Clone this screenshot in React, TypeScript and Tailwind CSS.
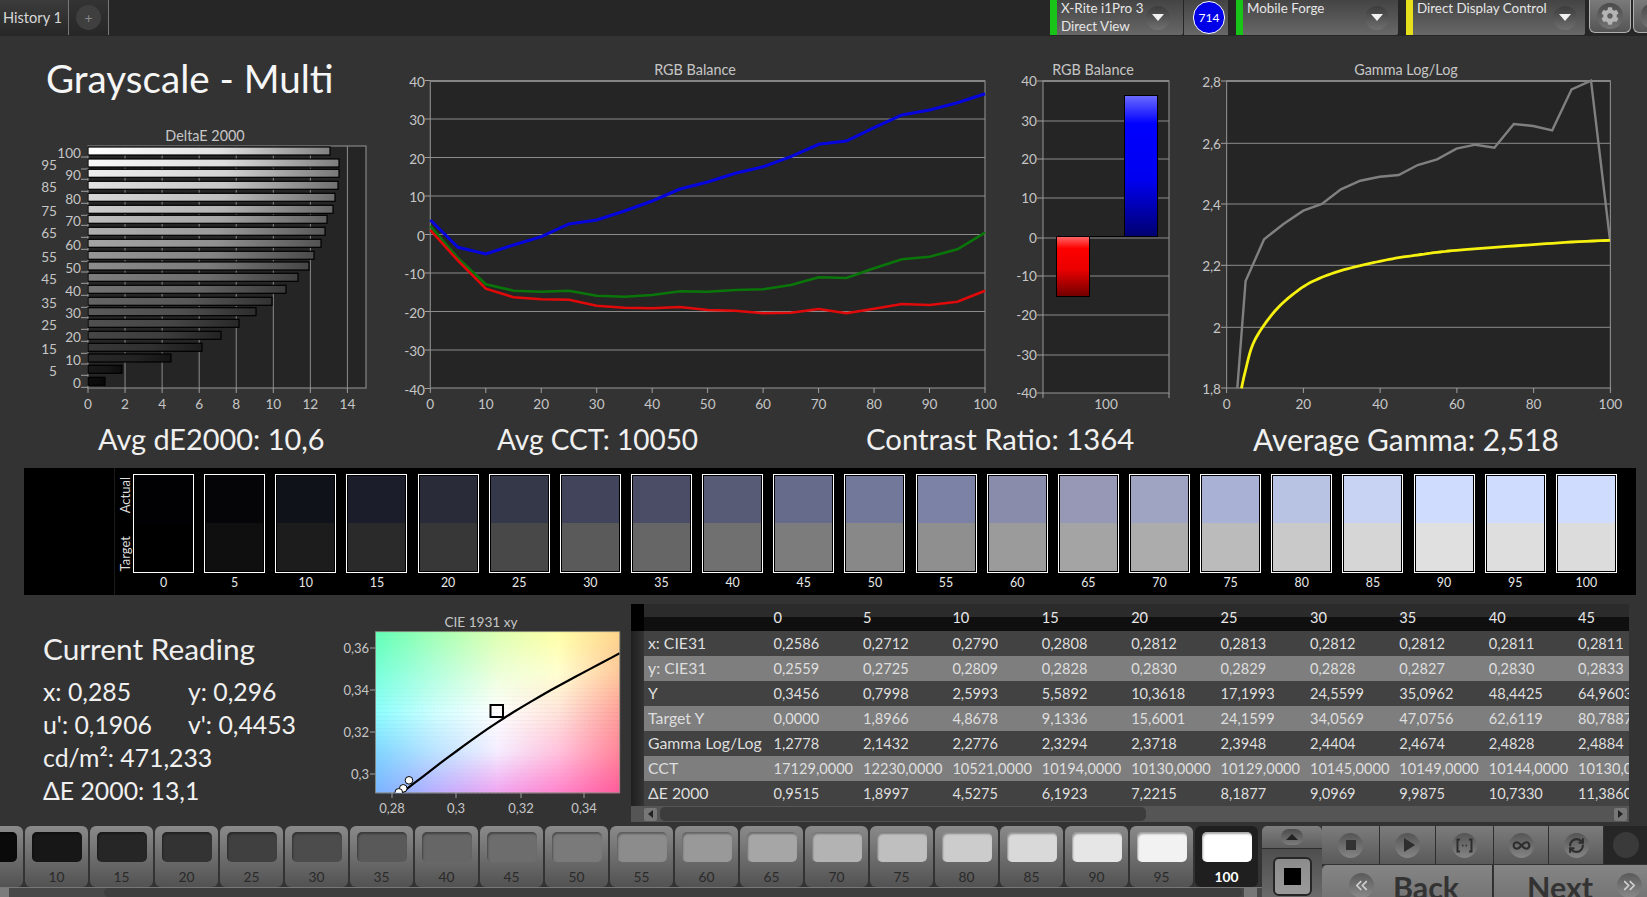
import React from "react";
import { FaCog } from "react-icons/fa";
import { Infinity as InfinityIcon, RefreshCw, ChevronsLeft, ChevronsRight } from "lucide-react";

const AX = "#c6c6c6";
const GRID = "#8c8c8c";
const FS = 13.6;
const TS = 14.4;

function pts(list: number[][]) {
  return list.map((p) => `${p[0].toFixed(1)},${p[1].toFixed(1)}`).join(" ");
}

function smooth(p: number[][]) {
  const out: number[][] = [];
  for (let i = 0; i < p.length - 1; i++) {
    const a = p[Math.max(0, i - 1)], b = p[i], c = p[i + 1], d = p[Math.min(p.length - 1, i + 2)];
    for (let k = 0; k < 6; k++) {
      const t = k / 6, t2 = t * t, t3 = t2 * t;
      out.push([0, 1].map((q) => 0.5 * (2 * b[q] + (c[q] - a[q]) * t + (2 * a[q] - 5 * b[q] + 4 * c[q] - d[q]) * t2 + (3 * b[q] - a[q] - 3 * c[q] + d[q]) * t3)));
    }
  }
  out.push(p[p.length - 1]);
  return out;
}

/* ---------- DeltaE bars ---------- */
const dEBars = [
  [100, 151, 330, 255], [95, 163, 339, 250], [90, 173.3, 339, 240], [85, 185.3, 338, 225], [80, 197.3, 335, 215],
  [75, 209.3, 333, 205], [70, 219.3, 327, 190], [65, 231.3, 325, 175], [60, 243.3, 321, 165], [55, 255.3, 314, 150],
  [50, 266, 309, 140], [45, 277.3, 298, 125], [40, 289.3, 286, 115], [35, 301.3, 272, 100], [30, 311.7, 256, 90],
  [25, 323.3, 239, 80], [20, 335.3, 221, 70], [15, 347.3, 202, 55], [10, 358, 171, 40], [5, 369.3, 122, 25], [0, 381.3, 105, 12],
];

function DeltaChart() {
  const xs = [0, 2, 4, 6, 8, 10, 12, 14];
  return (
    <svg width={400} height={300} viewBox="0 120 400 300" className="block">
      <defs>
        {dEBars.map(([n, , , l]) => (
          <linearGradient key={n} id={`de${n}`} x1="0" x2="1" y1="0" y2="0">
            <stop offset="0" stopColor={`rgb(${l},${l},${l})`} />
            <stop offset="0.55" stopColor={`rgb(${l * 0.88},${l * 0.88},${l * 0.88})`} />
            <stop offset="1" stopColor={`rgb(${l * 0.5},${l * 0.5},${l * 0.5})`} />
          </linearGradient>
        ))}
      </defs>
      <text x={205} y={141} textAnchor="middle" fontSize={TS} fill={AX}>DeltaE 2000</text>
      <rect x={88} y={146} width={278} height={242} fill="#252525" stroke="#858585" strokeWidth={1.2} />
      {xs.map((v) => {
        const x = 88 + v * 18.53;
        return (
          <g key={v}>
            {v > 0 && <line x1={x} x2={x} y1={146} y2={388} stroke={GRID} strokeWidth={1} />}
            <line x1={x} x2={x} y1={388} y2={393} stroke="#a0a0a0" />
            <text x={x} y={409} textAnchor="middle" fontSize={FS} fill={AX}>{v}</text>
          </g>
        );
      })}
      {dEBars.map(([n, cy, right], i) => (
        <g key={n}>
          <line x1={81} x2={88} y1={cy + 6} y2={cy + 6} stroke="#a0a0a0" />
          <rect x={88} y={cy - 4} width={right - 88} height={8} fill={`url(#de${n})`} stroke="#000" strokeWidth={1.2} />
          <text x={i % 2 === 0 ? 81 : 57} y={cy + 6.5} textAnchor="end" fontSize={FS} fill={AX}>{n}</text>
        </g>
      ))}
    </svg>
  );
}

/* ---------- RGB line chart ---------- */
const zx2 = (i: number) => 430.3 + i * 27.74;
const zy = (v: number) => 50 + v / 3;
const blue = [510, 592, 612, 585, 560, 522, 510, 483, 453, 417, 396, 370, 350, 320, 283, 273, 233, 195, 180, 158, 131];
const green = [528, 625, 703, 722, 725, 722, 737, 740, 735, 724, 725, 720, 718, 705, 682, 684, 655, 628, 620, 598, 548];
const red = [540, 632, 716, 742, 748, 749, 767, 773, 775, 771, 780, 782, 790, 788, 777, 790, 776, 762, 765, 755, 722];

function RgbChart() {
  const ys = [40, 30, 20, 10, 0, -10, -20, -30, -40];
  const yv = (v: number) => 234.5 - v * 3.85;
  const line = (a: number[]) => pts(a.map((v, i) => [zx2(i), zy(v)]));
  return (
    <svg width={610} height={384} viewBox="400 36 610 384" className="block">
      <text x={695} y={75} textAnchor="middle" fontSize={TS} fill={AX}>RGB Balance</text>
      <rect x={430.3} y={81} width={554.7} height={307} fill="#252525" stroke="#858585" strokeWidth={1.2} />
      <line x1={430} x2={985} y1={81} y2={81} stroke="#858585" strokeWidth={2} />
      {ys.map((v) => (
        <g key={v}>
          {v !== 40 && v !== -40 && <line x1={430} x2={985} y1={yv(v)} y2={yv(v)} stroke={GRID} strokeWidth={1} />}
          <line x1={425} x2={430} y1={yv(v)} y2={yv(v)} stroke="#a0a0a0" />
          <text x={425} y={yv(v) + 6} textAnchor="end" fontSize={FS} fill={AX}>{v}</text>
        </g>
      ))}
      {[0, 10, 20, 30, 40, 50, 60, 70, 80, 90, 100].map((v) => {
        const x = 430.3 + v * 5.547;
        return (
          <g key={v}>
            <line x1={x} x2={x} y1={388} y2={393} stroke="#a0a0a0" />
            <text x={x} y={409} textAnchor="middle" fontSize={FS} fill={AX}>{v}</text>
          </g>
        );
      })}
      <polyline points={line(green)} fill="none" stroke="#0a760a" strokeWidth={2.6} />
      <polyline points={line(red)} fill="none" stroke="#e00a0a" strokeWidth={2.6} />
      <polyline points={line(blue)} fill="none" stroke="#0606dc" strokeWidth={3} />
    </svg>
  );
}

/* ---------- RGB bars ---------- */
function RgbBars() {
  const rows: [number, number][] = [[40, 81], [30, 121], [20, 159], [10, 198], [0, 238], [-10, 276], [-20, 315], [-30, 355], [-40, 393]];
  return (
    <svg width={185} height={384} viewBox="1010 36 185 384" className="block">
      <defs>
        <linearGradient id="rb" x1="0" x2="0" y1="0" y2="1">
          <stop offset="0" stopColor="#ff6868" />
          <stop offset="0.2" stopColor="#ff0000" />
          <stop offset="0.55" stopColor="#ea0000" />
          <stop offset="1" stopColor="#700000" />
        </linearGradient>
        <linearGradient id="bb" x1="0" x2="0" y1="0" y2="1">
          <stop offset="0" stopColor="#6c6cff" />
          <stop offset="0.2" stopColor="#0000ff" />
          <stop offset="0.6" stopColor="#0000f0" />
          <stop offset="1" stopColor="#000070" />
        </linearGradient>
      </defs>
      <text x={1093} y={75} textAnchor="middle" fontSize={TS} fill={AX}>RGB Balance</text>
      <rect x={1043} y={81} width={126} height={312} fill="#252525" stroke="#858585" strokeWidth={1.2} />
      <line x1={1043} x2={1169} y1={81} y2={81} stroke="#858585" strokeWidth={2} />
      {rows.map(([v, y]) => (
        <g key={v}>
          {v !== 40 && v !== -40 && <line x1={1043} x2={1169} y1={y} y2={y} stroke={GRID} />}
          <line x1={1037} x2={1043} y1={y} y2={y} stroke="#a0a0a0" />
          <text x={1037} y={y + 5} textAnchor="end" fontSize={FS} fill={AX}>{v}</text>
        </g>
      ))}
      <line x1={1089} x2={1125} y1={236.5} y2={236.5} stroke="#000" />
      <rect x={1056.5} y={236.5} width={33} height={60} fill="url(#rb)" stroke="#000" />
      <rect x={1124.5} y={95.5} width={33} height={141} fill="url(#bb)" stroke="#000" />
      <line x1={1043} x2={1043} y1={393} y2={398} stroke="#a0a0a0" />
      <line x1={1169} x2={1169} y1={393} y2={398} stroke="#a0a0a0" />
      <text x={1106} y={409} textAnchor="middle" fontSize={FS} fill={AX}>100</text>
    </svg>
  );
}

/* ---------- Gamma ---------- */
const gx = (v: number) => 1000 + v / 2.423;
const grayLine = [[575, 1015], [595, 693], [640, 568], [687, 522], [735, 482], [780, 462], [826, 418], [873, 392], [920, 380], [966, 375], [1012, 345], [1059, 328], [1106, 296], [1152, 284], [1198, 293], [1245, 222], [1292, 228], [1338, 241], [1385, 118], [1432, 92], [1478, 570]];
const yellowLine = [[585, 1015], [595, 960], [612, 885], [640, 825], [680, 765], [735, 710], [780, 682], [826, 662], [873, 647], [920, 634], [966, 623], [1012, 615], [1059, 607], [1106, 601], [1198, 592], [1292, 584], [1385, 576], [1478, 571]];

function GammaChart() {
  const rows: [string, number][] = [["2,8", 81], ["2,6", 143.3], ["2,4", 204], ["2,2", 265.3], ["2", 327.3], ["1,8", 388]];
  return (
    <svg width={452} height={384} viewBox="1195 36 452 384" className="block">
      <text x={1406} y={75} textAnchor="middle" fontSize={TS} fill={AX}>Gamma Log/Log</text>
      <rect x={1226.6} y={81} width={383.8} height={307} fill="#252525" stroke="#858585" strokeWidth={1.2} />
      <line x1={1226.6} x2={1610.4} y1={81} y2={81} stroke="#858585" strokeWidth={2} />
      {rows.map(([l, y], i) => (
        <g key={l}>
          {i > 0 && i < 5 && <line x1={1226.6} x2={1610.4} y1={y} y2={y} stroke={GRID} />}
          <line x1={1221} x2={1226.6} y1={y} y2={y} stroke="#a0a0a0" />
          <text x={1221} y={y + 6} textAnchor="end" fontSize={FS} fill={AX}>{l}</text>
        </g>
      ))}
      {[0, 20, 40, 60, 80, 100].map((v) => {
        const x = 1226.6 + v * 3.838;
        return (
          <g key={v}>
            <line x1={x} x2={x} y1={388} y2={393} stroke="#a0a0a0" />
            <text x={x} y={409} textAnchor="middle" fontSize={FS} fill={AX}>{v}</text>
          </g>
        );
      })}
      <polyline points={pts(grayLine.map((p) => [gx(p[0]), zy(p[1])]))} fill="none" stroke="#808080" strokeWidth={2.4} />
      <polyline points={pts(smooth(yellowLine).map((p) => [gx(p[0]), zy(p[1])]))} fill="none" stroke="#f6f10e" strokeWidth={2.8} />
    </svg>
  );
}

/* ---------- CIE ---------- */
const cieCtl = [
  ["#62ffb6", "#a4ffb4", "#dcffb0", "#ffffa6", "#ffd48c"],
  ["#78ffd8", "#b4ffdc", "#ecffd8", "#ffffd0", "#ffc89a"],
  ["#8cffff", "#d0ffff", "#ffffff", "#ffe4da", "#ffa09a"],
  ["#80d4ff", "#bce2ff", "#f4ecff", "#ffc0dc", "#ff8498"],
  ["#78b4ff", "#bcaeff", "#f0a4f0", "#ff84cc", "#ff5c9a"],
].map((r) => r.map((h) => [parseInt(h.slice(1, 3), 16), parseInt(h.slice(3, 5), 16), parseInt(h.slice(5, 7), 16)]));

function cieColor(u: number, v: number) {
  const fx = u * 4, fy = v * 4;
  const i = Math.min(3, Math.floor(fx)), j = Math.min(3, Math.floor(fy));
  const a = fx - i, b = fy - j;
  const c = [0, 1, 2].map((k) =>
    Math.round((cieCtl[j][i][k] * (1 - a) + cieCtl[j][i + 1][k] * a) * (1 - b) + (cieCtl[j + 1][i][k] * (1 - a) + cieCtl[j + 1][i + 1][k] * a) * b)
  );
  return `rgb(${c[0]},${c[1]},${c[2]})`;
}

function CieChart() {
  const X0 = 375.5, Y0 = 631.7, W = 244, H = 161;
  const NX = 61, NY = 40;
  const cells: React.ReactNode[] = [];
  for (let j = 0; j < NY; j++)
    for (let i = 0; i < NX; i++)
      cells.push(
        <rect key={`${i}-${j}`} x={X0 + (i * W) / NX} y={Y0 + (j * H) / NY} width={W / NX + 0.6} height={H / NY + 0.6} fill={cieColor((i + 0.5) / NX, (j + 0.5) / NY)} />
      );
  const zX = (v: number) => v / 2.45;
  const zY = (v: number) => 600 + v / 3;
  return (
    <svg width={300} height={231} viewBox="330 595 300 231" className="block">
      <text x={481} y={627} textAnchor="middle" fontSize={13.6} fill={AX}>CIE 1931 xy</text>
      <g>{cells}</g>
      <rect x={X0} y={Y0} width={W} height={H} fill="none" stroke="#8a8a80" strokeWidth={0.8} />
      {[["0,36", 648], ["0,34", 690], ["0,32", 732], ["0,3", 774]].map(([l, y]) => (
        <g key={l as string}>
          <line x1={370} x2={375} y1={y as number} y2={y as number} stroke="#a0a0a0" />
          <text x={369} y={(y as number) + 4.5} textAnchor="end" fontSize={13} fill={AX}>{l}</text>
        </g>
      ))}
      {[["0,28", 392], ["0,3", 456], ["0,32", 521], ["0,34", 584]].map(([l, x]) => (
        <g key={l as string}>
          <line x1={x as number} x2={x as number} y1={793} y2={798} stroke="#a0a0a0" />
          <text x={x as number} y={813} textAnchor="middle" fontSize={13} fill={AX}>{l}</text>
        </g>
      ))}
      <clipPath id="cieclip"><rect x={X0} y={Y0} width={W} height={H} /></clipPath>
      <g clipPath="url(#cieclip)">
        <polyline points={pts(smooth([[985, 578], [1100, 470], [1215, 370], [1350, 270], [1518, 160]]).map((p) => [zX(p[0]), zY(p[1])]))} fill="none" stroke="#000" strokeWidth={2.2} />
        <circle cx={zX(1002)} cy={zY(541)} r={3.8} fill="#fff" stroke="#000" strokeWidth={1} />
        <circle cx={zX(988)} cy={zY(565)} r={3.8} fill="#fff" stroke="#000" strokeWidth={1} />
        <circle cx={zX(977)} cy={zY(577)} r={3.8} fill="#fff" stroke="#000" strokeWidth={1} />
      </g>
      <rect x={490.5} y={705} width={12.5} height={12} fill="none" stroke="#000" strokeWidth={2} />
    </svg>
  );
}

/* ---------- swatches ---------- */
const swatches = [
  [0, "#010103", "#000000"], [5, "#050508", "#0f0f0f"], [10, "#10121a", "#1c1c1c"], [15, "#1c1d2a", "#2a2a2a"],
  [20, "#2a2b38", "#373737"], [25, "#353849", "#484848"], [30, "#41445a", "#5a5a5a"], [35, "#4b4d66", "#666666"],
  [40, "#585b76", "#707070"], [45, "#666b8b", "#7c7c7c"], [50, "#72789a", "#888888"], [55, "#7b82a5", "#8f8f8f"],
  [60, "#8a8cac", "#9b9b9b"], [65, "#9698b5", "#a4a4a4"], [70, "#9ea4c2", "#acacac"], [75, "#a9b1d4", "#bbbbbb"],
  [80, "#b8c3e4", "#c9c9c9"], [85, "#c8d2f2", "#d6d6d6"], [90, "#cfdcfd", "#e0e0e0"], [95, "#cfdcfd", "#dedede"], [100, "#cfdcfd", "#dcdcdc"],
] as [number, string, string][];

/* ---------- table ---------- */
const tableHead = ["0", "5", "10", "15", "20", "25", "30", "35", "40", "45"];
const tableRows: [string, string[]][] = [
  ["x: CIE31", ["0,2586", "0,2712", "0,2790", "0,2808", "0,2812", "0,2813", "0,2812", "0,2812", "0,2811", "0,2811"]],
  ["y: CIE31", ["0,2559", "0,2725", "0,2809", "0,2828", "0,2830", "0,2829", "0,2828", "0,2827", "0,2830", "0,2833"]],
  ["Y", ["0,3456", "0,7998", "2,5993", "5,5892", "10,3618", "17,1993", "24,5599", "35,0962", "48,4425", "64,9603"]],
  ["Target Y", ["0,0000", "1,8966", "4,8678", "9,1336", "15,6001", "24,1599", "34,0569", "47,0756", "62,6119", "80,7887"]],
  ["Gamma Log/Log", ["1,2778", "2,1432", "2,2776", "2,3294", "2,3718", "2,3948", "2,4404", "2,4674", "2,4828", "2,4884"]],
  ["CCT", ["17129,0000", "12230,0000", "10521,0000", "10194,0000", "10130,0000", "10129,0000", "10145,0000", "10149,0000", "10144,0000", "10130,0000"]],
  ["ΔE 2000", ["0,9515", "1,8997", "4,5275", "6,1923", "7,2215", "8,1877", "9,0969", "9,9875", "10,7330", "11,3860"]],
];

function DataTable() {
  return (
    <div className="w-[998px] h-[218px] overflow-hidden flex flex-col text-[14.6px] text-[#dedede]">
      <div className="h-[27px] flex shrink-0">
        <div className="w-[13px] shrink-0 bg-black" />
        <div className="flex-1 flex items-end pb-[2px] bg-gradient-to-b from-[#2b2b2b] from-50% to-[#0f0f0f] to-50%">
          <div className="w-[129.6px] shrink-0" />
          {tableHead.map((h) => (
            <div key={h} className="w-[89.4px] shrink-0 text-[#e8e8e8]">{h}</div>
          ))}
        </div>
      </div>
      {tableRows.map(([label, vals], i) => (
        <div key={label} className={`h-[25px] flex items-center shrink-0 ${i % 2 ? "bg-[#7e7e7e]" : "bg-[#424242]"}`}>
          <div className="w-[13px] h-full shrink-0 bg-gradient-to-r from-[#1f1f1f] to-[#333333]" />
          <div className="w-[129.6px] shrink-0 pl-[4px] -mt-[1px] whitespace-nowrap text-[15.8px]">{label}</div>
          {vals.map((v, k) => (
            <div key={k} className="w-[89.4px] shrink-0 whitespace-nowrap">{v}</div>
          ))}
        </div>
      ))}
      <div className="h-[16px] shrink-0 bg-[#555555] flex items-center pl-[13px]">
        <div className="w-[13px] h-[13px] bg-[#777777] rounded-[2px] flex items-center justify-center shrink-0">
          <div className="w-0 h-0 border-y-[4px] border-y-transparent border-r-[5px] border-r-[#222222]" />
        </div>
        <div className="w-[486px] h-[14px] ml-[3px] rounded-[5px] bg-[#3c3c3c] shrink-0" />
        <div className="flex-1" />
        <div className="w-[13px] h-[13px] mr-[2px] bg-[#777777] rounded-[2px] flex items-center justify-center shrink-0">
          <div className="w-0 h-0 border-y-[4px] border-y-transparent border-l-[5px] border-l-[#222222]" />
        </div>
      </div>
    </div>
  );
}

/* ---------- header ---------- */
function DownCircle() {
  return (
    <div className="w-[24px] h-[24px] rounded-full bg-gradient-to-b from-[#3c3c3c] to-[#707070] flex items-center justify-center shrink-0">
      <div className="w-0 h-0 border-x-[6px] border-x-transparent border-t-[7px] border-t-[#f2f2f2]" />
    </div>
  );
}

function Selector({ w, strip, lines, pr }: { w: string; strip: string; lines: string[]; pr: string }) {
  return (
    <div className={`${w} h-[35px] flex bg-gradient-to-b from-[#444444] to-[#686868] rounded-b-[2px] shrink-0`}>
      <div className={`w-[7px] h-full shrink-0 ${strip}`} />
      <div className="flex-1 pl-[4px] text-[13.4px] leading-[18px] text-[#e6e6e6] whitespace-nowrap -mt-[1px]">
        {lines.map((l) => <div key={l}>{l}</div>)}
      </div>
      <div className={`flex items-center ${pr}`}><DownCircle /></div>
    </div>
  );
}

function Header() {
  return (
    <div className="h-[36px] shrink-0 bg-[#262626] flex overflow-hidden">
      <div className="w-[68px] h-[35px] shrink-0 bg-gradient-to-b from-[#3c3c3c] to-[#272727] text-[#d8d8d8] text-[14.6px] pl-[3px] pt-[7px] whitespace-nowrap">History 1</div>
      <div className="w-[41px] h-[35px] shrink-0 border-x border-[#777777] bg-gradient-to-b from-[#333333] to-[#272727] flex items-center justify-center">
        <div className="w-[25px] h-[25px] rounded-full bg-[#3f3f3f] text-[#888888] text-[14px] flex items-center justify-center">+</div>
      </div>
      <div className="w-[941px] shrink-0" />
      <Selector w="w-[133px]" strip="bg-[#19c419]" lines={["X-Rite i1Pro 3", "Direct View"]} pr="pr-[13px]" />
      <div className="w-[44px] h-[35px] ml-[1px] pl-[6px] bg-gradient-to-b from-[#444444] to-[#686868] flex items-center justify-center shrink-0">
        <div className="w-[32px] h-[33px] shrink-0 rounded-full bg-[#0000e8] border border-white text-white text-[12px] flex items-center justify-center">714</div>
      </div>
      <div className="w-[8px] shrink-0" />
      <Selector w="w-[162px]" strip="bg-[#19c419]" lines={["Mobile Forge"]} pr="pr-[9px]" />
      <div className="w-[8px] shrink-0" />
      <Selector w="w-[179px]" strip="bg-[#e6e01c]" lines={["Direct Display Control"]} pr="pr-[8px]" />
      <div className="w-[4px] shrink-0" />
      <div className="w-[42px] h-[33px] rounded-b-[6px] border-x border-b border-[#b0b0b0] bg-gradient-to-b from-[#7a7a7a] to-[#555555] flex items-center justify-center shrink-0">
        <div className="w-[26px] h-[26px] rounded-full bg-gradient-to-b from-[#4a4a4a] to-[#747474] flex items-center justify-center">
          <FaCog className="text-[#b4b4b4]" size={18} />
        </div>
      </div>
      <div className="w-[20px] h-[33px] ml-[2px] rounded-bl-[6px] border-l border-b border-[#b0b0b0] bg-gradient-to-b from-[#7a7a7a] to-[#555555] flex items-center pl-[7px] shrink-0">
        <div className="w-[20px] h-[24px] rounded-full bg-gradient-to-b from-[#4a4a4a] to-[#747474] shrink-0" />
      </div>
    </div>
  );
}

/* ---------- toolbar ---------- */
const bottomBtns: [number, string][] = [
  [5, "#0a0a0a"], [10, "#171717"], [15, "#262626"], [20, "#333333"], [25, "#404040"], [30, "#4c4c4c"], [35, "#595959"],
  [40, "#666666"], [45, "#6d6d6d"], [50, "#7a7a7a"], [55, "#8c8c8c"], [60, "#999999"], [65, "#a6a6a6"], [70, "#b3b3b3"],
  [75, "#bfbfbf"], [80, "#cccccc"], [85, "#d9d9d9"], [90, "#e6e6e6"], [95, "#f2f2f2"], [100, "#ffffff"],
];

function SmallCircle({ children }: { children: React.ReactNode }) {
  return (
    <div className="w-[25px] h-[25px] rounded-full bg-gradient-to-b from-[#555555] to-[#858585] flex items-center justify-center shrink-0">
      {children}
    </div>
  );
}

function Transport({ w, children }: { w: string; children: React.ReactNode }) {
  return (
    <div className={`${w} h-full shrink-0 bg-gradient-to-b from-[#7c7c7c] to-[#5a5a5a] border-r border-[#2e2e2e] flex items-center justify-center`}>
      <SmallCircle>{children}</SmallCircle>
    </div>
  );
}

function Toolbar() {
  return (
    <div className="h-[71px] shrink-0 flex overflow-hidden">
      <div className="w-[1262px] shrink-0 flex flex-col overflow-hidden">
        <div className="h-[61px] flex -ml-[40px] shrink-0">
          {bottomBtns.map(([n, c]) => {
            const sel = n === 100;
            return (
              <div
                key={n}
                className={`w-[63px] h-full mr-[2px] shrink-0 rounded-[6px] flex flex-col items-center pt-[6px] ${sel ? "bg-[#1f1f1f]" : "bg-gradient-to-b from-[#8a8a8a] via-[#6e6e6e] to-[#525252]"}`}
              >
                <div className="w-[50px] h-[30px] rounded-[5px] shrink-0 shadow-[inset_1px_2px_2px_rgba(0,0,0,0.35)]" style={{ backgroundColor: c }} />
                <div className={`mt-[7px] text-[13.8px] leading-[16px] ${sel ? "text-white font-bold" : "text-[#2a2a2a]"}`}>{n}</div>
              </div>
            );
          })}
        </div>
        <div className="h-[10px] bg-[#484848] border-t border-[#777777] flex items-start">
          <div className="w-[9px] h-full bg-[#7c7c7c] shrink-0" />
          <div className="w-[95px] shrink-0" />
          <div className="w-[1138px] h-full rounded-[5px] bg-[#3e3e3e] shrink-0" />
          <div className="w-[13px] h-full ml-[2px] bg-[#777777] shrink-0" />
        </div>
      </div>
      <div className="w-[60px] shrink-0 flex flex-col">
        <div className="h-[23px] rounded-t-[5px] bg-gradient-to-b from-[#7e7e7e] to-[#5e5e5e] border-b border-[#2e2e2e] flex items-center justify-center shrink-0">
          <div className="w-[22px] h-[16px] rounded-full bg-gradient-to-b from-[#4c4c4c] to-[#7c7c7c] flex items-center justify-center">
            <div className="w-0 h-0 border-x-[6px] border-x-transparent border-b-[6px] border-b-[#222222]" />
          </div>
        </div>
        <div className="flex-1 bg-gradient-to-b from-[#4e4e4e] to-[#6a6a6a] flex items-start justify-center pt-[8px]">
          <div className="w-[39px] h-[39px] shrink-0 rounded-[6px] border-[2px] border-[#262626] bg-gradient-to-b from-[#8c8c8c] to-[#9a9a9a] flex items-center justify-center">
            <div className="w-[17px] h-[17px] bg-black" />
          </div>
        </div>
      </div>
      <div className="flex-1 flex flex-col">
        <div className="h-[38px] flex shrink-0">
          <Transport w="w-[58px]"><div className="w-[10px] h-[10px] bg-[#333333]" /></Transport>
          <Transport w="w-[56px]">
            <div className="w-0 h-0 ml-[3px] border-y-[7px] border-y-transparent border-l-[11px] border-l-[#2e2e2e]" />
          </Transport>
          <Transport w="w-[58px]">
            <svg width={17} height={15} viewBox="0 0 17 15" fill="none" stroke="#2e2e2e">
              <path d="M4 1.5H1.5v12H4M13 1.5h2.5v12H13" strokeWidth={2} />
              <path d="M6 7.5h1.5M9.5 7.5h1.5" strokeWidth={1.4} />
            </svg>
          </Transport>
          <Transport w="w-[55px]"><InfinityIcon size={19} strokeWidth={2.6} className="text-[#2e2e2e]" /></Transport>
          <Transport w="w-[55px]"><RefreshCw size={17} strokeWidth={3} className="text-[#2e2e2e]" /></Transport>
          <div className="flex-1 bg-[#262626] flex items-center justify-center">
            <div className="w-[26px] h-[26px] rounded-full bg-[#3a3a3a] shrink-0" />
          </div>
        </div>
        <div className="flex-1 flex mt-[1px]">
          <div className="w-[171px] shrink-0 rounded-tl-[5px] bg-gradient-to-b from-[#858585] to-[#707070] border-r border-[#2e2e2e] flex items-start pl-[27px] pt-[8px]">
            <div className="w-[25px] h-[25px] rounded-full bg-gradient-to-b from-[#5a5a5a] to-[#8a8a8a] flex items-center justify-center shrink-0">
              <ChevronsLeft size={19} strokeWidth={2.2} className="text-[#cfcfcf]" />
            </div>
            <div className="ml-[19px] -mt-[6px] text-[#333333] text-[30.4px] leading-[40px] font-bold">Back</div>
          </div>
          <div className="flex-1 ml-[1px] bg-gradient-to-b from-[#858585] to-[#707070] flex items-start pl-[33px] pt-[8px]">
            <div className="-mt-[6px] text-[#333333] text-[30.4px] leading-[40px] font-bold">Next</div>
            <div className="w-[25px] h-[25px] ml-[24px] rounded-full bg-gradient-to-b from-[#5a5a5a] to-[#8a8a8a] flex items-center justify-center shrink-0">
              <ChevronsRight size={19} strokeWidth={2.2} className="text-[#cfcfcf]" />
            </div>
          </div>
        </div>
      </div>
    </div>
  );
}

export default function App() {
  return (
    <div className="w-[1647px] h-[897px] overflow-hidden bg-[#333333] flex flex-col font-[family-name:Lato,sans-serif]">
      <Header />

      <div className="h-[384px] flex shrink-0">
        <div className="w-[400px] shrink-0 flex flex-col">
          <div className="h-[84px] pl-[46px] pt-[20px] text-[38.6px] leading-[44px] text-[#f6f6f6] whitespace-nowrap">Grayscale - Multi</div>
          <DeltaChart />
        </div>
        <RgbChart />
        <RgbBars />
        <GammaChart />
      </div>

      <div className="h-[48px] shrink-0 flex items-start leading-[38px] text-[#f0f0f0] whitespace-nowrap">
        <div className="w-[497px] pl-[98px] shrink-0 text-[28.9px]">Avg dE2000: 10,6</div>
        <div className="w-[369px] shrink-0 text-[28px]">Avg CCT: 10050</div>
        <div className="w-[387px] shrink-0 text-[29.3px]">Contrast Ratio: 1364</div>
        <div className="text-[29.9px]">Average Gamma: 2,518</div>
      </div>

      <div className="h-[127px] shrink-0 ml-[24px] w-[1612px] bg-black flex">
        <div className="w-[91px] h-full shrink-0 border-r border-[#1a1a1a]" />
        <div className="w-[18px] h-full shrink-0 pl-[1px] pt-[9px] flex flex-col gap-[23px] items-center text-[13px] leading-[14px] text-[#dddddd]">
          <div className="[writing-mode:vertical-rl] rotate-180">Actual</div>
          <div className="[writing-mode:vertical-rl] rotate-180">Target</div>
        </div>
        <div className="flex gap-[10.15px] pt-[6px]">
          {swatches.map(([n, a, t]) => (
            <div key={n} className="w-[61px] shrink-0 flex flex-col items-center">
              <div className="w-full h-[99px] border border-white shrink-0">
                <div className="w-full h-full border border-black/20 flex flex-col">
                  <div className="h-[47px] shrink-0" style={{ backgroundColor: a }} />
                  <div className="flex-1" style={{ backgroundColor: t }} />
                </div>
              </div>
              <div className="text-[12.4px] leading-[20px] text-[#e8e8e8]">{n}</div>
            </div>
          ))}
        </div>
      </div>

      <div className="h-[231px] shrink-0 flex">
        <div className="w-[330px] shrink-0 pl-[43px] pt-[32px] text-[#f0f0f0] text-[24.8px] leading-[33px] whitespace-nowrap">
          <div className="text-[29.8px] leading-[44px] mb-[4px]">Current Reading</div>
          <div className="flex"><div className="w-[145px]">x: 0,285</div><div>y: 0,296</div></div>
          <div className="flex"><div className="w-[145px]">u': 0,1906</div><div>v': 0,4453</div></div>
          <div>cd/m²: 471,233</div>
          <div>ΔE 2000: 13,1</div>
        </div>
        <CieChart />
        <div className="pt-[9px] ml-[1px]"><DataTable /></div>
      </div>

      <Toolbar />
    </div>
  );
}
